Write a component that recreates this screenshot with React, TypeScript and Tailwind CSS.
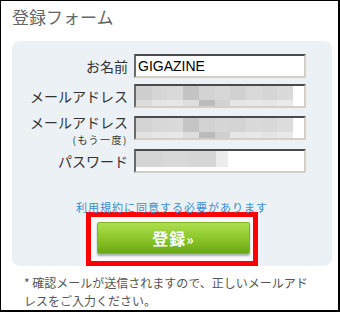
import React from "react";

const jp = { fontFamily: '"Noto Sans CJK JP", "Noto Sans", sans-serif' };
const latin = { fontFamily: '"Liberation Sans", Arial, sans-serif' };

type Mosaic = { top: string[]; bottom: string[] };

const mailMosaic: Mosaic = {
  top: ["#cfcfcf", "#d6d6d6", "#d9d9d9", "#c4c4c4", "#d3d3d3", "#d7d7d7", "#d1d1d1", "#d9d9d9", "#d6d6d6", "#dadada"],
  bottom: ["#dcdcdc", "#e4e4e4", "#e6e6e6", "#dedede", "#bcbcbc", "#d2d2d2", "#e6e6e6", "#e8e8e8", "#e6e6e6", "#eaeaea"],
};

const mailMosaic2: Mosaic = {
  top: ["#d4d4d4", "#d8d8d8", "#dadada", "#c5c5c5", "#d2d2d2", "#d6d6d6", "#d4d4d4", "#dadada", "#d8d8d8", "#dcdcdc"],
  bottom: ["#e2e2e2", "#e6e6e6", "#e8e8e8", "#dedede", "#bbbbbb", "#d0d0d0", "#e6e6e6", "#e8e8e8", "#e4e4e4", "#e9e9e9"],
};

const TextBox: React.FC<{ children?: React.ReactNode }> = ({ children }) => (
  <div className="w-[172px] h-[24px] bg-white border-2 border-t-[#4a4a4a] border-l-[#6a6a6a] border-r-[#d4d0c8] border-b-[#d4d0c8] overflow-hidden">
    {children}
  </div>
);

const Blur: React.FC<{ m: Mosaic }> = ({ m }) => (
  <div className="flex flex-col w-[157px] h-full">
    <div className="flex h-[14px]">
      {m.top.map((c, i) => (
        <div key={i} className="flex-1" style={{ background: c }} />
      ))}
    </div>
    <div className="flex h-[6px]">
      {m.bottom.map((c, i) => (
        <div key={i} className="flex-1" style={{ background: c }} />
      ))}
    </div>
  </div>
);

const Label: React.FC<{ children: React.ReactNode }> = ({ children }) => (
  <div className="w-[116px] text-right text-[14px] leading-[16px] text-[#333]" style={jp}>
    {children}
  </div>
);

export default function App() {
  return (
    <div className="w-[340px] h-[312px] bg-white border-l border-t border-r-2 border-b-2 border-black overflow-hidden" style={jp}>
      <h1 className="pt-[6px] pl-[11px] text-[17px] leading-[20px] text-[#666] font-normal">登録フォーム</h1>

      <div className="ml-[11px] mt-[14px] w-[320px] h-[225px] bg-[#ebf1f4] rounded-[8px] pt-[13px]">
        <div className="flex items-center gap-[6px]">
          <Label>お名前</Label>
          <TextBox>
            <div className="pl-[2px] text-[14px] leading-[20px] text-black" style={latin}>GIGAZINE</div>
          </TextBox>
        </div>

        <div className="flex items-center gap-[6px] mt-[6px]">
          <Label>メールアドレス</Label>
          <TextBox>
            <Blur m={mailMosaic} />
          </TextBox>
        </div>

        {/* row with the "(もう一度)" note under the label */}
        <div className="flex items-start gap-[6px] mt-[8px]">
          <div className="w-[116px] text-right text-[#333]">
            <div className="mt-[-2px] text-[14px] leading-[16px]">メールアドレス</div>
            <div className="mt-[4px] text-[10px] leading-[11px] tracking-[1.5px]">(もう一度)</div>
          </div>
          <TextBox>
            <Blur m={mailMosaic2} />
          </TextBox>
        </div>

        <div className="flex items-center gap-[6px] mt-[4px]">
          <Label>パスワード</Label>
          <TextBox>
            <div className="flex w-[92px] h-[16px]">
              <div className="flex-1 bg-[#d5d5d5]" />
              <div className="flex-1 bg-[#d8d8d8]" />
              <div className="flex-1 bg-[#d6d6d6]" />
              <div className="w-[12px] bg-[#ececec]" />
            </div>
          </TextBox>
        </div>

        <p className="mt-[28px] text-center text-[11px] leading-[12px] tracking-[1px] text-[#3d8dcc]">
          利用規約に同意する必要があります
        </p>

        <div className="mx-auto mt-[-1px] w-[172px] h-[54px] border-[5px] border-[#ff0000] bg-[#f7f9fa] pl-[6px] pt-[5px]">
          <button className="w-[153px] h-[32px] rounded-[2px] border border-[#7cb52a] bg-gradient-to-b from-[#addf4e] via-[#8dc72a] to-[#6aa812] text-white font-bold text-[16px] leading-[20px] shadow-[0_2px_2px_rgba(0,0,0,0.3)] tracking-[1px]">
            登録<span className="text-[14px]">»</span>
          </button>
        </div>
      </div>

      <p className="mt-[8px] pl-[23px] text-[12px] leading-[18px] text-[#555]">
        * 確認メールが送信されますので、正しいメールアド
        <br />
        レスをご入力ください。
      </p>
    </div>
  );
}
